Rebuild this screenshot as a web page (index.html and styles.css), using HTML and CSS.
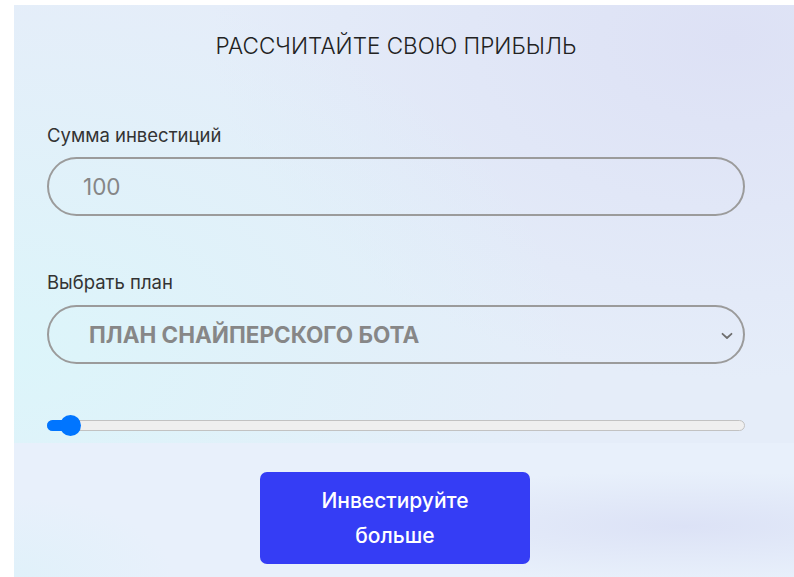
FILE: index.html
```html
<!doctype html>
<html>
<head>
	<meta charset='utf-8' />
	<title>Калькулятор прибыли</title>
	<link rel="stylesheet" href="styles.css">
</head>

<body>
	<div class='page'>
		<div class='calc'>
			<h2 class='calc-title'>РАССЧИТАЙТЕ СВОЮ ПРИБЫЛЬ</h2>
			<label class='calc-label'>Сумма инвестиций</label>
			<div class='field'>100</div>
			<label class='calc-label plan'>Выбрать план</label>
			<div class='field select'>
				<span>ПЛАН СНАЙПЕРСКОГО БОТА</span>
				<svg class='chev' width='12' height='8' viewBox='0 0 12 8'><path d='M1.5 1.8 L6 6 L10.5 1.8' fill='none' stroke='#6f6f6f' stroke-width='1.8' stroke-linecap='round' stroke-linejoin='round'/></svg>
			</div>
			<div class='range'>
				<div class='range-fill'></div>
				<div class='range-thumb'></div>
			</div>
		</div>
		<div class='bottom'>
			<div class='btn'>Инвестируйте<br>больше</div>
		</div>
	</div>
</body>
</html>
```

FILE: styles.css
```css
/*CSS reset*/
body,div,h2,label{margin:0;padding:0;}
body{background:#fff;font-family:Inter,"Noto Sans",sans-serif;color:#333;}

/*结构*/
.page{margin:5px 0 0 14px;}
.calc{height:438px;box-sizing:border-box;padding:29px 49px 0 33px;
	background:
		radial-gradient(ellipse 560px 380px at 0% 80%,#dcf5fa 0%,rgba(220,245,250,0) 100%),
		radial-gradient(ellipse 520px 340px at 92% 8%,#dde1f5 0%,rgba(221,225,245,0) 100%),
		#e5edf9;}
.calc-title{font-family:Inter,sans-serif;font-weight:300;font-size:22.5px;line-height:24px;text-align:center;color:#222;}
.calc-label{display:block;font-size:18.5px;line-height:20px;margin-top:67px;color:#333;}
.calc-label.plan{margin-top:56px;}
.field{margin-top:12px;height:59px;box-sizing:border-box;border:2px solid #9b9b9b;border-radius:30px;padding:0 34px;display:flex;align-items:center;font-size:22.5px;color:#868686;}
.select{margin-top:13px;padding:0 10px 0 40px;justify-content:space-between;font-weight:700;font-size:22.5px;color:#878787;}
.chev{margin-top:2px;}

.range{position:relative;margin-top:56px;height:11px;box-sizing:border-box;border:1px solid #c2c2c2;border-radius:6px;background:#efefef;}
.range-fill{position:absolute;left:-1px;top:-1px;width:22px;height:11px;border-radius:6px 0 0 6px;background:#0075ff;}
.range-thumb{position:absolute;left:12px;top:-6px;width:21px;height:21px;border-radius:50%;background:#0075ff;}

.bottom{height:134px;box-sizing:border-box;padding:29px 0 0 246px;
	background:
		radial-gradient(ellipse 360px 55px at 86% 62%,#dce2f6 0%,rgba(220,226,246,0) 100%),
		radial-gradient(ellipse 160px 80px at 0% 100%,#e0f1fa 0%,rgba(224,241,250,0) 100%),
		#e8f0fb;}
.btn{width:270px;height:92px;box-sizing:border-box;padding-top:11px;border-radius:7px;background:#353df5;color:#fff;text-align:center;font-size:21px;font-weight:500;line-height:35px;}
```
